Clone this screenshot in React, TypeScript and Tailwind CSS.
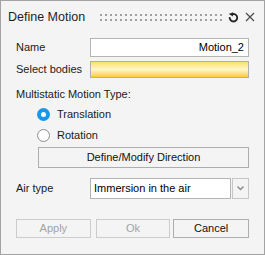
import { ReactNode } from "react";

const FONT = "font-['Liberation_Sans',Arial,sans-serif]";

function RefreshIcon() {
  return (
    <svg width="11" height="11" viewBox="0 0 12 12" fill="none">
      <path
        d="M4.6 2.4A4.1 4.1 0 1 1 1.9 5.6"
        stroke="#262626"
        strokeWidth="2"
        strokeLinecap="butt"
      />
      <path d="M0.8 2.2L5.6 0.2L5.4 5Z" fill="#262626" />
    </svg>
  );
}

function CloseIcon() {
  return (
    <svg width="10" height="10" viewBox="0 0 10 10">
      <path d="M1 1L9 9M9 1L1 9" stroke="#4a4a4a" strokeWidth="1.2" />
    </svg>
  );
}

function Grip() {
  const dots = Array.from({ length: 25 }, (_, i) => i);
  return (
    <svg width="124" height="8" viewBox="0 0 124 8">
      {dots.map((i) => (
        <g key={i} fill="#a0a0a0">
          <rect x={i * 5} y={0} width="2" height="2" />
          <rect x={i * 5} y={5} width="2" height="2" />
        </g>
      ))}
    </svg>
  );
}

function Row({ label, children, className }: { label: string; children: ReactNode; className?: string }) {
  return (
    <div className={`flex items-center ${className ?? ""}`}>
      <span className="w-[74px] shrink-0">{label}</span>
      {children}
    </div>
  );
}

function Radio({ checked, label, className }: { checked?: boolean; label: string; className?: string }) {
  return (
    <div className={`flex h-[16px] items-center pl-[21px] ${className ?? ""}`}>
      {checked ? (
        <span className="flex h-[13px] w-[13px] items-center justify-center rounded-full bg-[#1b97e6]">
          <span className="h-[5px] w-[5px] rounded-full bg-white" />
        </span>
      ) : (
        <span className="h-[13px] w-[13px] rounded-full border border-[#8c8c8c] bg-white" />
      )}
      <span className="ml-[7px]">{label}</span>
    </div>
  );
}

function Button({ children, disabled, className }: { children: ReactNode; disabled?: boolean; className?: string }) {
  return (
    <button
      className={`flex items-center justify-center border bg-[#f4f4f4] text-[11px] ${
        disabled ? "border-[#cccccc] text-[#a3a3a3]" : "border-[#adadad] text-[#111]"
      } ${className ?? ""}`}
    >
      {children}
    </button>
  );
}

export default function App() {
  return (
    <div className={`flex h-[255px] w-[265px] flex-col border border-[#a3a3a3] bg-[#f4f4f4] text-[11px] text-[#1a1a1a] ${FONT}`}>
      <header className="flex h-[32px] items-center pl-[7px] pr-[9px]">
        <span className="text-[12.5px] text-[#1f1f1f]">Define Motion</span>
        <span className="ml-auto mt-[1px]">
          <Grip />
        </span>
        <span className="ml-[4px] flex items-center">
          <RefreshIcon />
        </span>
        <span className="ml-[6px] flex items-center">
          <CloseIcon />
        </span>
      </header>

      <div className="flex flex-col pl-[15px] pr-[15px]">
        <Row label="Name" className="mt-[5px] h-[19px]">
          <div className="flex h-full flex-1 items-center justify-end border border-[#b4b4b4] bg-white pr-[4px] text-black">
            Motion_2
          </div>
        </Row>
        <Row label="Select bodies" className="mt-[4px] h-[17px]">
          <div className="h-full flex-1 border border-[#b0b0b0] bg-linear-to-b from-[#fde062] via-[#fff6c6] to-[#fbcf1c]" />
        </Row>

        <div className="mt-[10px] h-[13px] leading-[13px]">Multistatic Motion Type:</div>
        <Radio checked label="Translation" className="mt-[5px]" />
        <Radio label="Rotation" className="mt-[5px]" />

        <Button className="ml-[22px] mt-[4px] h-[21px]">Define/Modify Direction</Button>

        <Row label="Air type" className="mt-[10px] h-[21px]">
          <div className="flex h-full flex-1">
            <div className="flex flex-1 items-center border border-[#b4b4b4] bg-white pl-[3px] text-black">
              Immersion in the air
            </div>
            <div className="ml-[1px] flex w-[17px] items-center justify-center border border-[#c6c6c6] bg-[#f4f4f4]">
              <svg width="7" height="5" viewBox="0 0 7 5">
                <path d="M0.5 0.5L3.5 3.5L6.5 0.5" stroke="#8a8a8a" strokeWidth="1.4" fill="none" />
              </svg>
            </div>
          </div>
        </Row>

        <div className="mt-[20px] flex h-[19px]">
          <Button disabled className="w-[75px]">Apply</Button>
          <Button disabled className="ml-[5px] w-[75px]">Ok</Button>
          <Button className="ml-[3px] w-[76px]">Cancel</Button>
        </div>
      </div>
    </div>
  );
}
